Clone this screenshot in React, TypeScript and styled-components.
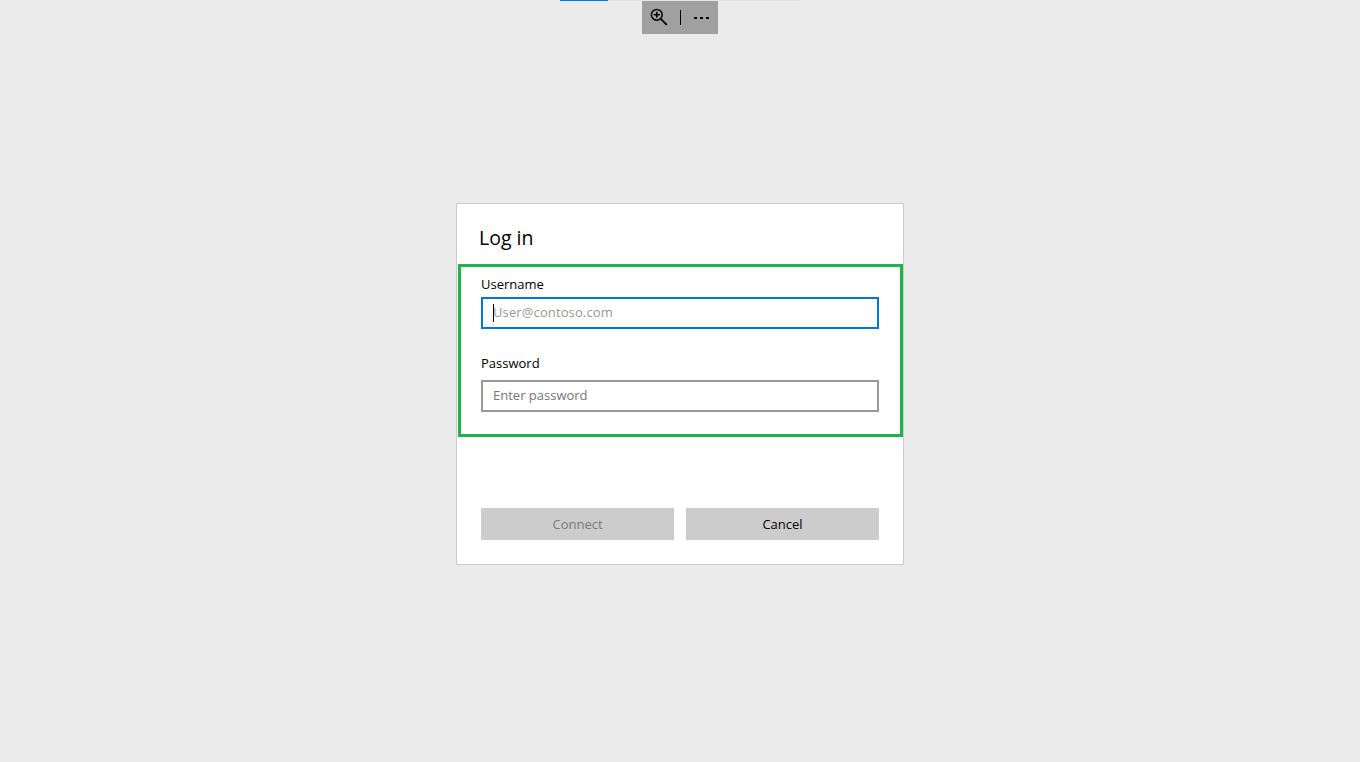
import React from 'react';
import styled, { createGlobalStyle } from 'styled-components';

const FONT = '"Open Sans", "Noto Sans", "Liberation Sans", sans-serif';

const GlobalStyle = createGlobalStyle`
    html, body {
        margin: 0;
        padding: 0;
        height: 100%;
        background-color: #ebebeb;
        font-family: ${FONT};
    }
`

const Page = styled.div`
    height: 762px;
    overflow: hidden;
    display: flex;
    flex-direction: column;
    align-items: center;
`

const ProgressTrack = styled.div`
    width: 240px;
    height: 1px;
    background-color: #e3e3e3;
    display: flex;
`

const ProgressFill = styled.div`
    width: 48px;
    background-color: #0078d7;
`

const Toolbar = styled.div`
    box-sizing: border-box;
    width: 76px;
    height: 33px;
    padding-left: 8px;
    padding-bottom: 2px;
    background-color: #a0a0a0;
    display: flex;
    align-items: center;
`

const ToolbarIcon = styled.svg`
    display: block;
    width: 18px;
    height: 18px;
`

const ToolbarDivider = styled.div`
    width: 1px;
    height: 15px;
    margin: 2px 13px 0 12px;
    background-color: #000;
`

const MoreIcon = styled.svg`
    display: block;
    width: 16px;
    height: 4px;
    margin-top: 2px;
`

const Dialog = styled.form`
    box-sizing: border-box;
    width: 448px;
    height: 362px;
    margin-top: 169px;
    border: 1px solid #cccccc;
    background-color: #fff;
    color: #000;
`

const Title = styled.h1`
    box-sizing: border-box;
    height: 60px;
    margin: 0;
    padding: 20px 0 0 22px;
    font-size: 19.5px;
    line-height: 28px;
    font-weight: 400;
`

const Highlight = styled.div`
    box-sizing: border-box;
    width: 445px;
    height: 173px;
    margin-left: 1px;
    padding: 7px 21px 0 20px;
    border: 3px solid #22b14c;
`

const Label = styled.label<{ $height: number }>`
    display: block;
    height: ${(props) => props.$height}px;
    font-size: 13px;
    line-height: 20px;
`

const Field = styled.div<{ $gap: number }>`
    margin-bottom: ${(props) => props.$gap}px;
`

const InputBox = styled.div<{ $focused?: boolean }>`
    position: relative;
    height: 32px;
    box-sizing: border-box;
    border: 2px solid ${(props) => props.$focused ? '#0078d7' : '#999999'};
`

const Input = styled.input`
    display: block;
    box-sizing: border-box;
    width: 100%;
    height: 28px;
    padding: 0 10px 2px;
    border: 0;
    outline: 0;
    background: transparent;
    font-family: ${FONT};
    font-size: 13px;
    color: #000;

    &::placeholder {
        color: #767676;
        opacity: 1;
    }
`

const Caret = styled.div`
    position: absolute;
    left: 10px;
    top: 5px;
    width: 1px;
    height: 18px;
    background-color: #000;
`

const FocusedInput = styled(Input)`
    letter-spacing: 0.12px;

    &::placeholder {
        color: #999999;
    }
`

const Footer = styled.div`
    display: flex;
    gap: 12px;
    margin-top: 71px;
    padding-left: 24px;
`

const ActionButton = styled.button`
    width: 193px;
    height: 32px;
    padding: 0;
    border: 0;
    background-color: #cccccc;
    color: #000;
    font-family: ${FONT};
    font-size: 13px;

    &:disabled {
        color: #7a7a7a;
    }
`

export default function App() {
    return (
        <Page>
            <GlobalStyle />
            <ProgressTrack>
                <ProgressFill />
            </ProgressTrack>
            <Toolbar>
                <ToolbarIcon viewBox="0 0 18 18" fill="none" stroke="#000">
                    <circle cx="6.8" cy="6.8" r="5.4" strokeWidth="1.5" />
                    <path d="M6.8 3.8v6M3.8 6.8h6" strokeWidth="1.5" />
                    <path d="M10.8 10.8l6 6" strokeWidth="1.8" />
                </ToolbarIcon>
                <ToolbarDivider />
                <MoreIcon viewBox="0 0 16 4" fill="#000">
                    <rect x="0" y="1" width="3" height="2" />
                    <rect x="6" y="1" width="3" height="2" />
                    <rect x="12" y="1" width="3" height="2" />
                </MoreIcon>
            </Toolbar>
            <Dialog>
                <Title>Log in</Title>
                <Highlight>
                    <Field $gap={24}>
                        <Label $height={23}>Username</Label>
                        <InputBox $focused>
                            <FocusedInput placeholder="User@contoso.com" />
                            <Caret />
                        </InputBox>
                    </Field>
                    <Field $gap={0}>
                        <Label $height={27}>Password</Label>
                        <InputBox>
                            <Input placeholder="Enter password" />
                        </InputBox>
                    </Field>
                </Highlight>
                <Footer>
                    <ActionButton type="button" disabled>Connect</ActionButton>
                    <ActionButton type="button">Cancel</ActionButton>
                </Footer>
            </Dialog>
        </Page>
    );
}
